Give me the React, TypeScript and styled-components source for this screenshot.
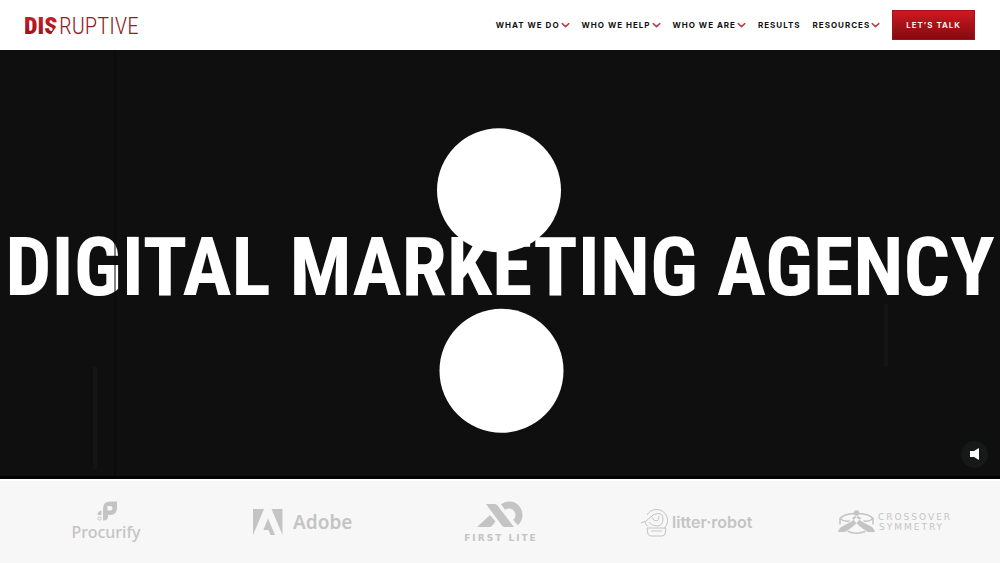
import React from "react";
import styled, { createGlobalStyle } from "styled-components";

const GlobalStyle = createGlobalStyle`
  * { box-sizing: border-box; }
  body { margin: 0; background: #f7f7f7; font-family: Inter, "Liberation Sans", sans-serif; }
`;

const Header = styled.header`
  display: flex;
  align-items: center;
  justify-content: space-between;
  min-height: 50px;
  padding: 0 25px;
  background: #fff;
`;

const Brand = styled.a`
  display: block;
  text-decoration: none;
  line-height: 0;
`;

const Nav = styled.nav`
  display: flex;
  align-items: center;
  gap: 12px;
`;

const NavButton = styled.button`
  display: flex;
  align-items: center;
  gap: 1px;
  padding: 0;
  border: 0;
  background: none;
  color: #111;
  font: 700 8px/16px Inter, sans-serif;
  letter-spacing: 1px;
  white-space: nowrap;
  cursor: pointer;
`;

const NavLink = styled.a`
  color: #111;
  font: 700 8px/16px Inter, sans-serif;
  letter-spacing: 1px;
  text-decoration: none;
`;

const TalkLink = styled.a`
  padding: 6px 13px;
  border: 1px solid #a3141a;
  background: linear-gradient(#cf1920, #830a0f);
  color: #fff;
  font: 600 8px/16px Inter, sans-serif;
  letter-spacing: 1px;
  text-decoration: none;
  white-space: nowrap;
`;

const Hero = styled.section`
  position: relative;
  display: flex;
  align-items: center;
  justify-content: center;
  aspect-ratio: 7 / 3;
  padding-top: 8px;
  overflow: hidden;
  background: #0f0f0f;
  border-bottom: 3px solid #030303;
`;

const Headline = styled.h1`
  margin: 0;
  color: #fff;
  font-family: "Roboto Condensed", "Liberation Sans Narrow", sans-serif;
  font-weight: 700;
  font-size: 8.2vw;
  line-height: 1;
  white-space: nowrap;
`;

const Shapes = styled.svg`
  position: absolute;
  inset: 0;
  width: 100%;
  height: 100%;
`;

const SoundButton = styled.button`
  position: absolute;
  right: 12px;
  bottom: 8px;
  display: grid;
  place-items: center;
  width: 27px;
  height: 27px;
  padding: 0;
  border: 0;
  border-radius: 50%;
  background: #171919;
  cursor: pointer;
`;

const Clients = styled.ul`
  display: grid;
  grid-template-columns: repeat(5, 1fr);
  align-items: center;
  min-height: 84px;
  margin: 0;
  padding: 0 8px;
  list-style: none;
  background: #f7f7f7;
  border-top: 2px solid #fff;
`;

const Client = styled.li`
  display: flex;
  justify-content: center;
  color: #c4c4c4;
`;

const Chevron = () => (
  <svg width="9" height="8" viewBox="0 0 9 8" fill="none" stroke="#b3414c" strokeWidth="1.5" strokeLinecap="round" strokeLinejoin="round" aria-hidden="true">
    <path d="M1.2 2.6 4.5 5.6 7.8 2.6" />
  </svg>
);

const Logo = () => (
  <svg width="118" height="32" viewBox="0 0 118 32" role="img" aria-label="Disruptive">
    <defs>
      <linearGradient id="brand" x1="0" y1="0" x2="0" y2="1">
        <stop offset="0" stopColor="#d3222a" />
        <stop offset="1" stopColor="#8d0f14" />
      </linearGradient>
    </defs>
    <text x="-1" y="25" fontFamily="Roboto Condensed" fontWeight="900" fontSize="24" fill="url(#brand)">DIS</text>
    <path d="M24 28 31 18 34 18 34 28Z" fill="#fff" />
    <text x="34" y="25" fontFamily="Roboto Condensed" fontWeight="300" fontSize="23" fill="#8f1c26">RUPTIVE</text>
  </svg>
);

const Procurify = () => (
  <svg width="74" height="44" viewBox="0 0 74 44" fill="currentColor" role="img" aria-label="Procurify">
    <path fillRule="evenodd" d="M34 20.500V8.500Q34 1.500 41 1.500H48V8Q48 15 41 15H39V16.500Q39 20.500 34.500 20.500ZM38.500 6V10.500H41Q43.500 10.500 43.500 8.200 43.500 6 41 6Z" />
    <path d="M32.500 10.500V15H28.500Q28.800 11 32.500 10.500Z" />
    <circle cx="30.500" cy="18.500" r="1.600" fill="none" stroke="currentColor" />
    <text x="37" y="38" textAnchor="middle" fontFamily="Noto Sans" fontWeight="500" fontSize="16">Procurify</text>
  </svg>
);

const Adobe = () => (
  <svg width="104" height="32" viewBox="0 0 104 32" fill="currentColor" role="img" aria-label="Adobe">
    <path d="M2 3H13L2 29ZM20.500 3H31.500V29ZM17 12.500 24 29H19.500L17.500 24H12.300Z" />
    <text x="42" y="23" fontFamily="Noto Sans" fontWeight="600" fontSize="19">Adobe</text>
  </svg>
);

const FirstLite = () => (
  <svg width="84" height="44" viewBox="0 0 84 44" fill="currentColor" role="img" aria-label="First Lite">
    <path d="M28 4H37Q38.500 4 39.500 5.500L56 27H46.500Q45 27 43.500 25ZM32 15 37.500 21.500 34 26Q33 27 31.500 27H19Z" />
    <path d="M45 7A10 10 0 0 1 57.500 22.600" fill="none" stroke="currentColor" strokeWidth="7" />
    <text x="43" y="41" textAnchor="middle" fontFamily="DejaVu Sans" fontWeight="700" fontSize="9" letterSpacing="2">FIRST LITE</text>
  </svg>
);

const LitterRobot = () => (
  <svg width="114" height="32" viewBox="0 0 114 32" fill="currentColor" role="img" aria-label="Litter-Robot">
    <g fill="none" stroke="currentColor" strokeWidth="1">
      <path d="M7 9A11 11 0 1 1 23.500 23M8 20.500Q5.500 18.500 5 16" />
      <path d="M1 17Q7 15.500 10 11.500 13 7.500 19 7.500 23 8 23 13 23 19.500 17 20 12 20 9 16M12 11Q13 15 17 15 19 14 19 10M7 22H26L25 28Q24.500 30 22 30H11Q8.500 30 8 28ZM11 25H22" />
    </g>
    <text x="32" y="22" fontFamily="Inter" fontWeight="600" fontSize="16">litter·robot</text>
  </svg>
);

const Crossover = () => (
  <svg width="116" height="26" viewBox="0 0 116 26" fill="currentColor" role="img" aria-label="Crossover Symmetry">
    <circle cx="20.500" cy="4" r="2.800" />
    <g fill="none" stroke="currentColor" strokeLinecap="round">
      <path d="M4 15V9.500Q8 4.500 20.500 4.500T37 9.500V15M12 22.500Q20.500 26 29 22.500" strokeWidth="1.500" />
      <path d="M4 9.500Q8 13 13 12M37 9.500Q33 13 28 12" strokeWidth="1.500" />
    </g>
    <path d="M2 23Q3 18 9 16 16 13 22 7L25 9Q18 18 9 23ZM39 23Q38 18 32 16 25 13 19 7L16 9Q23 18 32 23Z" />
    <g fontFamily="DejaVu Sans" fontSize="9" letterSpacing="2">
      <text x="42" y="11">CROSSOVER</text>
      <text x="43" y="21">SYMMETRY</text>
    </g>
  </svg>
);

const menus = ["WHAT WE DO", "WHO WE HELP", "WHO WE ARE"];

const Menu = ({ label }: { label: string }) => (
  <NavButton type="button" aria-haspopup="true">
    {label}
    <Chevron />
  </NavButton>
);

export default function App() {
  return (
    <>
      <GlobalStyle />
      <Header>
        <Brand href="#"><Logo /></Brand>
        <Nav>
          {menus.map((label) => <Menu key={label} label={label} />)}
          <NavLink href="#results">RESULTS</NavLink>
          <Menu label="RESOURCES" />
          <TalkLink href="#talk">LET’S TALK</TalkLink>
        </Nav>
      </Header>
      <main>
        <Hero>
          <Headline>DIGITAL MARKETING AGENCY</Headline>
          <Shapes viewBox="0 0 1000 426" preserveAspectRatio="xMidYMid slice" aria-hidden="true">
            <path d="M115 0V426" stroke="#080808" />
            <path d="M886 254V317M95 317V420" stroke="#151515" strokeWidth="4" />
            <circle cx="499" cy="140.500" r="62" fill="#fff" />
            <circle cx="501.500" cy="321" r="62" fill="#fff" />
          </Shapes>
          <SoundButton type="button" aria-label="Unmute video">
            <svg width="10" height="12" viewBox="0 0 10 12" fill="#fff" aria-hidden="true">
              <path d="M0 3H4L9 0V12L4 9H0Z" />
            </svg>
          </SoundButton>
        </Hero>
        <Clients>
          <Client><Procurify /></Client>
          <Client><Adobe /></Client>
          <Client><FirstLite /></Client>
          <Client><LitterRobot /></Client>
          <Client><Crossover /></Client>
        </Clients>
      </main>
    </>
  );
}
